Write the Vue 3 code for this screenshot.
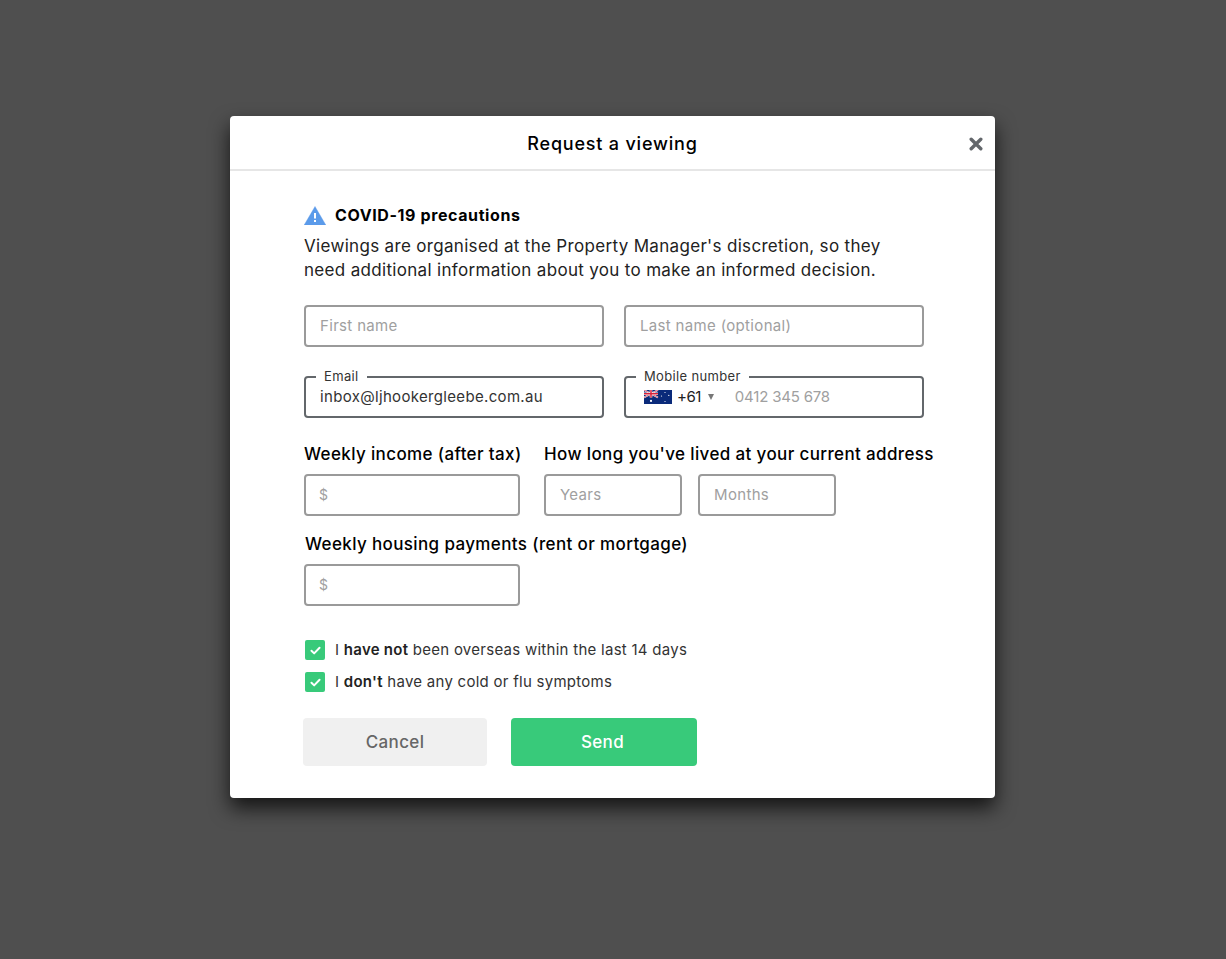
<script setup>
const checks = [
  { strong: 'have not', rest: ' been overseas within the last 14 days' },
  { strong: "don't", rest: ' have any cold or flu symptoms' }
]
</script>

<template>
  <div class="overlay">
    <section class="modal">
      <header class="head">
        <h1>Request a viewing</h1>
        <svg class="close" viewBox="0 0 14 14" width="14" height="14"><path d="M2.2 2.2l9.6 9.6M11.8 2.2l-9.6 9.6" stroke="#63676b" stroke-width="3.4" stroke-linecap="round" fill="none"/></svg>
      </header>
      <div class="body">
        <div class="notice">
          <svg viewBox="0 0 22 19" width="22" height="19"><path d="M11 0.5L21.8 19H0.2z" fill="#5b9bea" stroke="#5b9bea" stroke-width=".4" stroke-linejoin="round"/><rect x="10" y="7" width="2" height="5.5" fill="#fff"/><rect x="10" y="14" width="2" height="2" fill="#fff"/></svg>
          <strong>COVID-19 precautions</strong>
        </div>
        <p class="intro">Viewings are organised at the Property Manager's discretion, so they<br>need additional information about you to make an informed decision.</p>

        <div class="row names">
          <div class="field w300 ph">First name</div>
          <div class="field w300 ph">Last name (optional)</div>
        </div>
        <div class="row contact">
          <div class="field w300 dark">
            <span class="float">Email</span>
            <span class="val">inbox@ljhookergleebe.com.au</span>
          </div>
          <div class="field w300 dark">
            <span class="float">Mobile number</span>
            <svg class="flag" viewBox="0 0 28 14" width="28" height="14">
              <rect width="28" height="14" fill="#0a2a7a"/>
              <path d="M0 0l14 7.5M14 0L0 7.5" stroke="#fff" stroke-width="1.6"/>
              <path d="M0 0l14 7.5M14 0L0 7.5" stroke="#d8203a" stroke-width=".7"/>
              <path d="M7 0v7.5M0 3.75h14" stroke="#fff" stroke-width="2.6"/>
              <path d="M7 0v7.5M0 3.75h14" stroke="#d8203a" stroke-width="1.5"/>
              <circle cx="7" cy="10.9" r="1.1" fill="#fff"/>
              <circle cx="21" cy="2.5" r=".6" fill="#fff"/>
              <circle cx="21" cy="11.5" r=".6" fill="#fff"/>
              <circle cx="17.5" cy="6" r=".6" fill="#fff"/>
              <circle cx="24.8" cy="5.4" r=".6" fill="#fff"/>
            </svg>
            <span class="code">+61</span>
            <span class="caret"></span>
            <span class="ph-text">0412 345 678</span>
          </div>
        </div>

        <div class="row money">
          <div class="group income">
            <label>Weekly income (after tax)</label>
            <div class="field w216 ph"><span class="dollar">$</span></div>
          </div>
          <div class="group">
            <label>How long you've lived at your current address</label>
            <div class="pair">
              <div class="field w138 ph">Years</div>
              <div class="field w138 ph">Months</div>
            </div>
          </div>
        </div>
        <div class="group housing">
          <label>Weekly housing payments (rent or mortgage)</label>
          <div class="field w216 ph"><span class="dollar">$</span></div>
        </div>

        <ul class="checks">
          <li v-for="c in checks" :key="c.strong">
            <span class="box"><svg viewBox="0 0 12 10" width="11" height="9"><path d="M1.5 5.2l3 3 6-6.2" stroke="#fff" stroke-width="2.2" stroke-linecap="round" stroke-linejoin="round" fill="none"/></svg></span>
            <span class="check-text">I <b>{{ c.strong }}</b>{{ c.rest }}</span>
          </li>
        </ul>

        <div class="actions">
          <button class="cancel" type="button">Cancel</button>
          <button class="send" type="button">Send</button>
        </div>
      </div>
    </section>
  </div>
</template>

<style>
html, body { margin: 0; padding: 0; }
</style>

<style scoped>
.overlay {
  width: 1226px;
  height: 959px;
  background: #4f4f4f;
  box-sizing: border-box;
  padding: 116px 0 0 230px;
  font-family: Inter, Lato, "Liberation Sans", sans-serif;
  color: #111;
}
.modal {
  width: 765px;
  height: 682px;
  background: #fff;
  border-radius: 4px;
  box-shadow: 0 10px 20px rgba(0, 0, 0, .75);
}
.head {
  position: relative;
  height: 55px;
  box-sizing: border-box;
  padding-top: 2px;
  border-bottom: 2px solid #e6e6e6;
  display: flex;
  align-items: center;
  justify-content: center;
}
h1 {
  margin: 0;
  font-size: 18px;
  font-weight: 500;
  letter-spacing: .8px;
  color: #000;
}
.close { position: absolute; right: 12px; top: 21px; }
.body { padding: 33px 0 0 74px; }
.notice {
  display: flex;
  align-items: center;
  gap: 9px;
  height: 22px;
  font-size: 16px;
  letter-spacing: .6px;
  color: #000;
}
.notice strong { font-weight: 700; }
.intro {
  margin: 8px 0 0;
  font-size: 17px;
  line-height: 24px;
  letter-spacing: .32px;
  color: #222;
}
.row { display: flex; gap: 20px; }
.names { margin-top: 23px; }
.contact { margin-top: 29px; }
.money { margin-top: 26px; gap: 24px; }
.field {
  position: relative;
  height: 42px;
  box-sizing: border-box;
  border: 2px solid #9a9a9a;
  border-radius: 4px;
  display: flex;
  align-items: center;
  padding: 0 14px 2px;
  font-size: 15px;
  letter-spacing: .33px;
  background: #fff;
}
.ph { color: #a0a0a0; }
.dark { border-color: #63676b; color: #333; }
.w300 { width: 300px; }
.w216 { width: 216px; }
.w138 { width: 138px; }
.float {
  position: absolute;
  left: 10px;
  top: -11px;
  padding: 0 8px;
  background: #fff;
  font-size: 13px;
  line-height: 18px;
  height: 12px;
  letter-spacing: .35px;
  color: #333;
}
.flag { margin: 2px 5px 0 4px; flex: none; }
.code { letter-spacing: -.5px; color: #222; }
.caret {
  margin: 2px 0 0 7px;
  width: 0;
  height: 0;
  border-left: 3.5px solid transparent;
  border-right: 3.5px solid transparent;
  border-top: 6px solid #777;
}
.ph-text { margin-left: 21px; letter-spacing: -.2px; color: #a0a0a0; }
.dollar { font-size: 14px; margin-left: -1px; }
.group label {
  display: block;
  height: 20px;
  line-height: 20px;
  margin-bottom: 10px;
  font-size: 17px;
  font-weight: 500;
  letter-spacing: .37px;
  color: #000;
  white-space: nowrap;
}
.income { width: 216px; }
.pair { display: flex; gap: 16px; }
.housing { margin-top: 18px; }
.housing label { padding-left: 1px; }
.checks {
  list-style: none;
  margin: 34px 0 0 1px;
  padding: 0;
  display: flex;
  flex-direction: column;
  gap: 12px;
}
.checks li {
  display: flex;
  align-items: center;
  gap: 10px;
  height: 20px;
  font-size: 15px;
  letter-spacing: .27px;
  color: #333;
}
.check-text { padding-bottom: 2px; }
.checks b { font-weight: 600; color: #222; }
.box {
  width: 20px;
  height: 20px;
  border-radius: 2px;
  background: #38ca7a;
  display: flex;
  align-items: center;
  justify-content: center;
}
.actions { display: flex; gap: 24px; margin: 26px 0 0 -1px; }
button {
  height: 48px;
  border: 0;
  border-radius: 4px;
  font: 500 17px Inter, Lato, "Liberation Sans", sans-serif;
  letter-spacing: .35px;
}
.cancel { width: 184px; background: #f0f0f0; color: #666; }
.send { width: 186px; padding: 0 3px 0 0; background: #38ca7a; color: #fff; }
</style>
